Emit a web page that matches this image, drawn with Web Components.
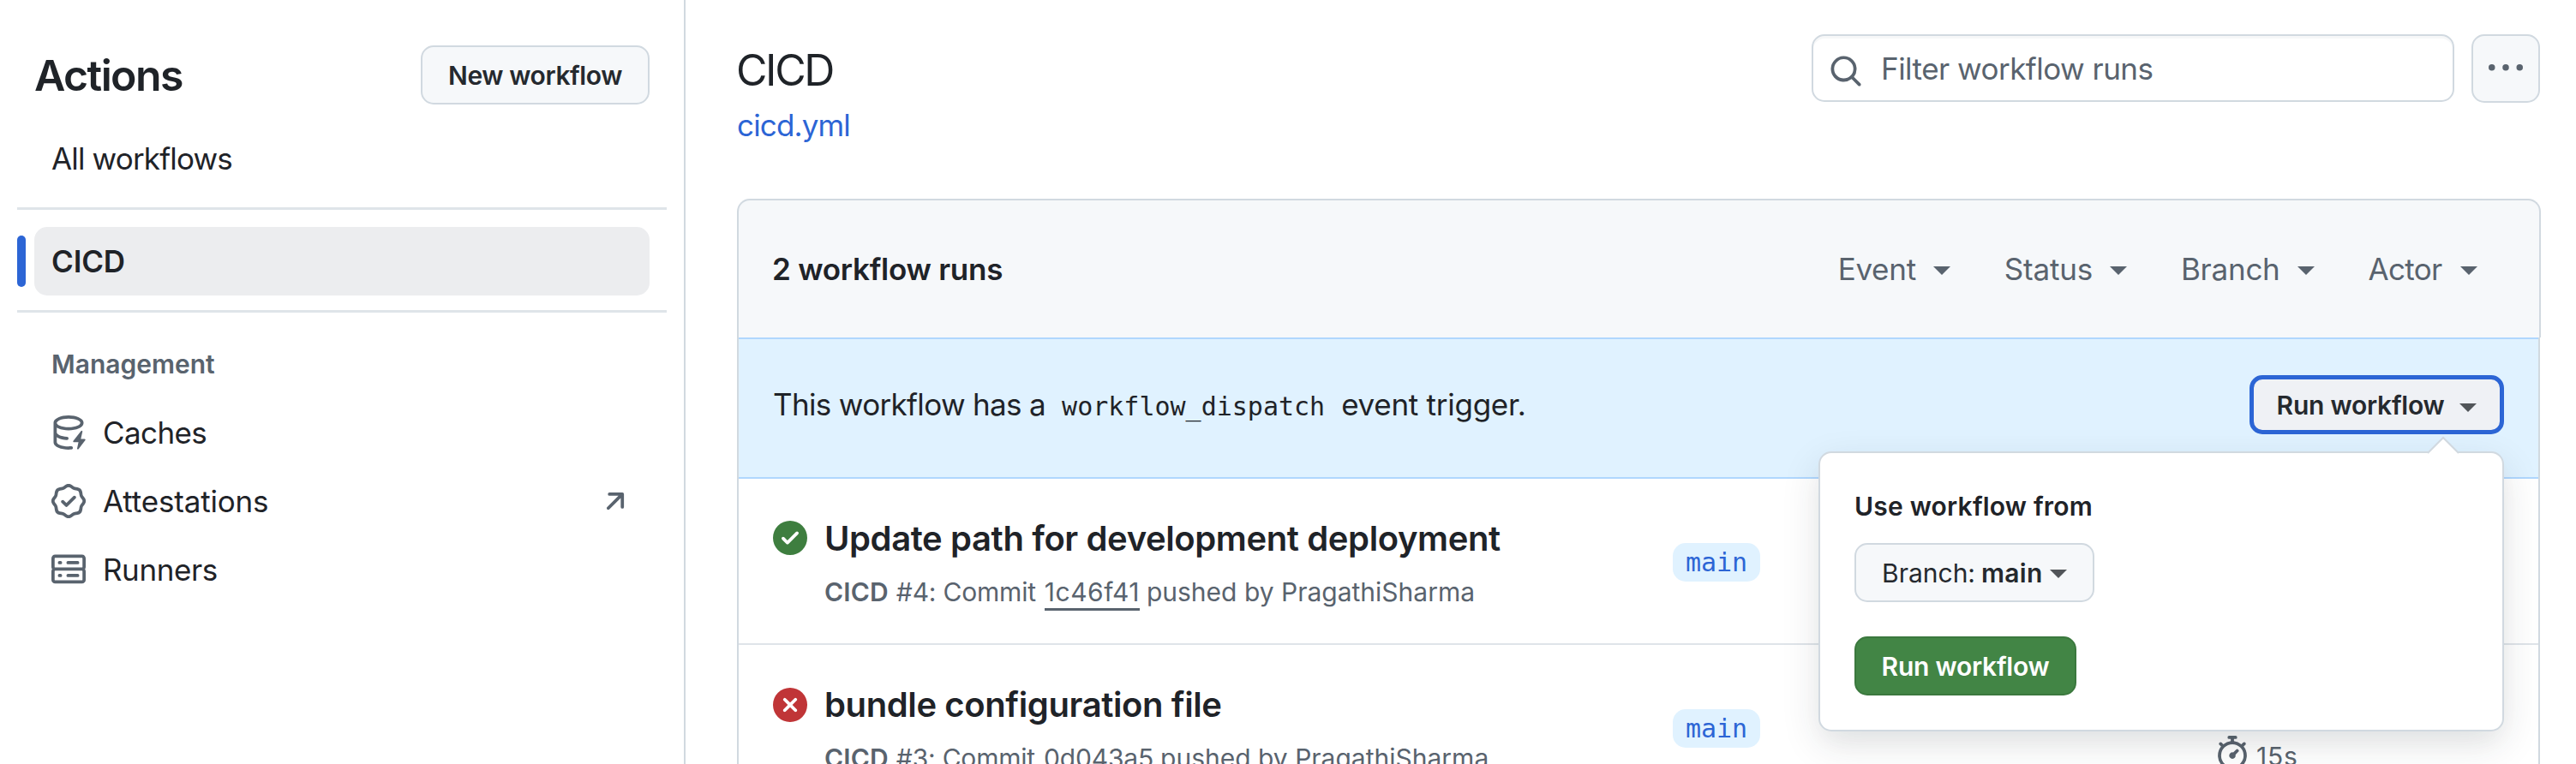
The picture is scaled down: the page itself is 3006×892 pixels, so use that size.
<!DOCTYPE html>
<html lang="en">
<head>
<meta charset="utf-8">
<title>Workflow runs</title>
<style>
  html, body { margin: 0; background: #fff; }
  body {
    width: 3006px; height: 892px; overflow: hidden;
    font-family: Inter, "Liberation Sans", sans-serif;
    color: #1f2328;
    --muted: #59636e;
    --border: #d1d9e0;
    --blue: #2c65d5;
  }
</style>
</head>
<body>
<actions-page></actions-page>

<script>
const ICONS = {
  cache: '<path d="M2.5 5.724V8c0 .248.238.7 1.169 1.159.874.43 2.144.745 3.62.822a.75.75 0 1 1-.078 1.498c-1.622-.085-3.102-.432-4.204-.975a5.565 5.565 0 0 1-.507-.28V12.5c0 .133.058.318.282.551.227.237.591.483 1.101.707 1.015.447 2.47.742 4.117.742.406 0 .802-.018 1.183-.052a.751.751 0 1 1 .134 1.494C8.89 15.98 8.45 16 8 16c-1.805 0-3.475-.32-4.721-.869-.623-.274-1.173-.619-1.579-1.041-.408-.425-.7-.964-.7-1.59v-9c0-.626.292-1.165.7-1.591.406-.42.956-.766 1.579-1.04C4.525.32 6.195 0 8 0c1.806 0 3.476.32 4.721.869.623.274 1.173.619 1.579 1.041.408.425.7.964.7 1.59 0 .626-.292 1.165-.7 1.591-.406.42-.956.766-1.578 1.04C11.475 6.68 9.805 7 8 7c-1.805 0-3.475-.32-4.721-.869a6.15 6.15 0 0 1-.779-.407Zm0-2.224c0 .133.058.318.282.551.227.237.591.483 1.101.707C4.898 5.205 6.353 5.5 8 5.5c1.646 0 3.101-.295 4.118-.742.508-.224.873-.471 1.1-.708.224-.232.282-.417.282-.55 0-.133-.058-.318-.282-.551-.227-.237-.591-.483-1.101-.707C11.102 1.795 9.647 1.5 8 1.5c-1.646 0-3.101.295-4.118.742-.508.224-.873.471-1.1.708-.224.232-.282.417-.282.55Z"/><path d="M14.49 7.582a.375.375 0 0 0-.66-.313l-3.625 4.625a.375.375 0 0 0 .295.606h2.127l-.619 2.922a.375.375 0 0 0 .666.304l3.125-4.125A.375.375 0 0 0 15.5 11h-1.778l.769-3.418Z"/>',
  verified: '<path d="m9.585.52.929.68c.153.112.331.186.518.215l1.138.175a2.678 2.678 0 0 1 2.24 2.24l.174 1.139c.029.187.103.365.215.518l.68.928a2.677 2.677 0 0 1 0 3.17l-.68.928a1.174 1.174 0 0 0-.215.518l-.175 1.138a2.678 2.678 0 0 1-2.241 2.241l-1.138.175a1.17 1.17 0 0 0-.518.215l-.928.68a2.677 2.677 0 0 1-3.17 0l-.928-.68a1.174 1.174 0 0 0-.518-.215L3.83 14.41a2.678 2.678 0 0 1-2.24-2.24l-.175-1.138a1.17 1.17 0 0 0-.215-.518l-.68-.928a2.677 2.677 0 0 1 0-3.17l.68-.928c.112-.153.186-.331.215-.518l.175-1.14a2.678 2.678 0 0 1 2.24-2.24l1.139-.175c.187-.029.365-.103.518-.215l.928-.68a2.677 2.677 0 0 1 3.17 0ZM7.303 1.728l-.927.68a2.67 2.67 0 0 1-1.18.489l-1.137.174a1.179 1.179 0 0 0-.987.987l-.174 1.136a2.677 2.677 0 0 1-.489 1.18l-.68.928a1.18 1.18 0 0 0 0 1.394l.68.927c.256.348.424.753.489 1.18l.174 1.137c.078.509.478.909.987.987l1.136.174a2.67 2.67 0 0 1 1.18.489l.928.68c.414.305.979.305 1.394 0l.927-.68a2.67 2.67 0 0 1 1.18-.489l1.137-.174a1.18 1.18 0 0 0 .987-.987l.174-1.136a2.67 2.67 0 0 1 .489-1.18l.68-.928a1.176 1.176 0 0 0 0-1.394l-.68-.927a2.686 2.686 0 0 1-.489-1.18l-.174-1.137a1.179 1.179 0 0 0-.987-.987l-1.136-.174a2.677 2.677 0 0 1-1.18-.489l-.928-.68a1.176 1.176 0 0 0-1.394 0ZM11.28 6.78l-3.75 3.75a.75.75 0 0 1-1.06 0L4.72 8.78a.751.751 0 0 1 .018-1.042.751.751 0 0 1 1.042-.018L7 8.94l3.22-3.22a.751.751 0 0 1 1.042.018.751.751 0 0 1 .018 1.042Z"/>',
  server: '<path d="M1.75 1h12.5c.966 0 1.75.784 1.75 1.75v4c0 .372-.116.717-.314 1 .198.283.314.628.314 1v4a1.75 1.75 0 0 1-1.75 1.75H1.75A1.75 1.75 0 0 1 0 12.75v-4c0-.358.109-.707.314-1a1.739 1.739 0 0 1-.314-1v-4C0 1.784.784 1 1.75 1ZM1.5 2.75v4c0 .138.112.25.25.25h12.5a.25.25 0 0 0 .25-.25v-4a.25.25 0 0 0-.25-.25H1.75a.25.25 0 0 0-.25.25Zm.25 5.75a.25.25 0 0 0-.25.25v4c0 .138.112.25.25.25h12.5a.25.25 0 0 0 .25-.25v-4a.25.25 0 0 0-.25-.25ZM7 4.75A.75.75 0 0 1 7.75 4h4.5a.75.75 0 0 1 0 1.5h-4.5A.75.75 0 0 1 7 4.75ZM7.75 10h4.5a.75.75 0 0 1 0 1.5h-4.5a.75.75 0 0 1 0-1.5ZM3 4.75A.75.75 0 0 1 3.75 4h.5a.75.75 0 0 1 0 1.5h-.5A.75.75 0 0 1 3 4.75ZM3.75 10h.5a.75.75 0 0 1 0 1.5h-.5a.75.75 0 0 1 0-1.5Z"/>',
  arrow: '<path d="M4.53 4.75A.75.75 0 0 1 5.28 4h6.01a.75.75 0 0 1 .75.75v6.01a.75.75 0 0 1-1.5 0v-4.2l-5.26 5.261a.749.749 0 0 1-1.275-.326.749.749 0 0 1 .215-.734L9.48 5.5h-4.2a.75.75 0 0 1-.75-.75Z"/>',
  search: '<path d="M10.68 11.74a6 6 0 0 1-7.922-8.982 6 6 0 0 1 8.982 7.922l3.04 3.04a.749.749 0 0 1-.326 1.275.749.749 0 0 1-.734-.215ZM11.5 7a4.499 4.499 0 1 0-8.997 0A4.499 4.499 0 0 0 11.5 7Z"/>',
  kebab: '<path d="M8 9a1.5 1.5 0 1 0 0-3 1.5 1.5 0 0 0 0 3ZM1.5 9a1.5 1.5 0 1 0 0-3 1.5 1.5 0 0 0 0 3Zm13 0a1.5 1.5 0 1 0 0-3 1.5 1.5 0 0 0 0 3Z"/>',
  success: '<path d="M8 16A8 8 0 1 1 8 0a8 8 0 0 1 0 16Zm3.78-9.72a.751.751 0 0 0-.018-1.042.751.751 0 0 0-1.042-.018L6.75 9.19 5.28 7.72a.751.751 0 0 0-1.042.018.751.751 0 0 0-.018 1.042l2 2a.75.75 0 0 0 1.06 0Z"/>',
  failure: '<path d="M2.343 13.657A8 8 0 1 1 13.658 2.343 8 8 0 0 1 2.343 13.657ZM6.03 4.97a.751.751 0 0 0-1.042.018.751.751 0 0 0-.018 1.042L6.94 8 4.97 9.97a.749.749 0 0 0 .326 1.275.749.749 0 0 0 .734-.215L8 9.06l1.97 1.97a.749.749 0 0 0 1.275-.326.749.749 0 0 0-.215-.734L9.06 8l1.97-1.97a.749.749 0 0 0-.326-1.275.749.749 0 0 0-.734.215L8 6.94Z"/>',
  stopwatch: '<path d="M5.75.75A.75.75 0 0 1 6.5 0h3a.75.75 0 0 1 0 1.5h-.75v1l-.001.041a6.724 6.724 0 0 1 3.464 1.435l.007-.006.75-.75a.749.749 0 0 1 1.275.326.749.749 0 0 1-.215.734l-.75.75-.006.007a6.75 6.75 0 1 1-10.548 0L2.72 5.03l-.75-.75a.751.751 0 0 1 .018-1.042.751.751 0 0 1 1.042-.018l.75.75.007.006A6.72 6.72 0 0 1 7.25 2.541V1.5H6.5a.75.75 0 0 1-.75-.75ZM8 14.5a5.25 5.25 0 1 0-.001-10.501A5.25 5.25 0 0 0 8 14.5Zm.389-6.7 1.33-1.33a.75.75 0 1 1 1.061 1.06L9.45 8.861A1.503 1.503 0 0 1 8 10.75a1.499 1.499 0 1 1 .389-2.95Z"/>'
};

/* Registers an element whose shadow root is rendered from css + markup. */
function define(name, css, html) {
  customElements.define(name, class extends HTMLElement {
    connectedCallback() {
      if (this.shadowRoot) return;
      const root = this.attachShadow({ mode: 'open' });
      const t = document.createElement('template');
      t.innerHTML = `<style>*{box-sizing:border-box}${css}</style>${typeof html === 'function' ? html(this) : html}`;
      root.append(t.content.cloneNode(true));
    }
  });
}

define('oct-icon', `
  :host { display: block; flex: none; width: 40px; height: 40px; }
  svg { display: block; width: 100%; height: 100%; fill: currentColor; }`,
  el => `<svg viewBox="0 0 16 16" aria-hidden="true">${ICONS[el.getAttribute('name')]}</svg>`);

define('drop-caret', `
  :host { display: block; flex: none; width: 0; height: 0;
    border: 10px solid transparent; border-top-color: currentColor; border-bottom: 0; }`, '');

define('ui-button', `
  :host { display: flex; align-items: center; justify-content: center; flex: none; height: 69px;
    box-sizing: border-box; border: 2px solid var(--border); border-radius: 15px; background: #f6f8fa;
    color: #25292e; font-size: 30px; font-weight: 560; white-space: nowrap; }
  :host([variant=primary]) { background: #428545; border-color: #3b783e; color: #fff; }
  :host([variant=focus]) { background: #eff1f5; border: 5px solid var(--blue); }`, '<slot></slot>');

define('nav-item', `
  :host { display: flex; align-items: center; height: 80px; margin: 0 40px 0 40px; padding: 0 20px;
    box-sizing: border-box; border-radius: 15px; font-size: 35px; position: relative; white-space: nowrap; }
  :host([current]) { background: #ecedef; font-weight: 600; }
  :host([current])::before { content: ""; position: absolute; left: -20px; top: 10px; width: 10px; height: 60px;
    border-radius: 5px; background: var(--blue); }
  oct-icon { color: var(--muted); margin-right: 20px; }
  .trail { margin: 0 0 0 auto; }`,
  el => `${el.hasAttribute('icon') ? `<oct-icon name="${el.getAttribute('icon')}"></oct-icon>` : ''}<slot></slot>
    ${el.hasAttribute('external') ? '<oct-icon class="trail" name="arrow"></oct-icon>' : ''}`);

define('nav-divider', `:host { display: block; height: 3px; margin: 17px 20px 20px; background: #dfe4e9; }`, '');

define('side-bar', `
  :host { display: block; flex: none; width: 800px; height: 892px; box-sizing: border-box;
    border-right: 2px solid var(--border); padding-top: 53px; }
  header { display: flex; align-items: center; justify-content: space-between; height: 69px; margin: 0 40px 23px; }
  h2 { margin: 0; font-size: 50px; font-weight: 600; letter-spacing: -1.59px; }
  ui-button { width: 267px; letter-spacing: -.4px; }
  h3 { margin: 0; height: 80px; padding-left: 60px; line-height: 80px; font-size: 30px; font-weight: 600; color: var(--muted); }`, `
  <header><h2>Actions</h2><ui-button>New workflow</ui-button></header>
  <nav-item style="letter-spacing:-.84px">All workflows</nav-item>
  <nav-divider></nav-divider>
  <nav-item current style="letter-spacing:-.16px">CICD</nav-item>
  <nav-divider></nav-divider>
  <h3>Management</h3>
  <nav-item icon="cache" style="letter-spacing:-.6px">Caches</nav-item>
  <nav-item icon="verified" external style="letter-spacing:-.17px">Attestations</nav-item>
  <nav-item icon="server" style="letter-spacing:-.4px">Runners</nav-item>`);

define('page-heading', `
  :host { display: flex; justify-content: space-between; height: 232px; padding-top: 40px; box-sizing: border-box; }
  h1 { margin: 11px 0 6px -1px; font-size: 50px; line-height: 63px; font-weight: 400; letter-spacing: -2.4px; }
  a { display: block; font-size: 35px; line-height: 53px; letter-spacing: -.85px; color: var(--blue); }
  .tools { display: flex; gap: 20px; align-items: flex-start; color: var(--muted); }
  .search { display: flex; align-items: center; width: 750px; height: 79px; padding-left: 18px;
    border: 2px solid var(--border); border-radius: 15px; font-size: 35px; letter-spacing: -.52px;
    box-shadow: inset 0 3px 0 #f6f7f8; }
  .search oct-icon { margin: 6px 21px 0 0; }
  ui-button { width: 80px; height: 80px; color: var(--muted); }`, `
  <div><h1>CICD</h1><a>cicd.yml</a></div>
  <div class="tools">
    <div class="search"><oct-icon name="search"></oct-icon>Filter workflow runs</div>
    <ui-button><oct-icon name="kebab"></oct-icon></ui-button>
  </div>`);

define('filter-menu', `
  :host { display: flex; align-items: center; gap: 20px; white-space: nowrap; }
  drop-caret { margin-top: 4px; }`, '<slot></slot><drop-caret></drop-caret>');

define('runs-header', `
  :host { display: flex; align-items: center; justify-content: space-between; height: 162px; box-sizing: border-box;
    margin-right: -1px; padding: 0 72px 0 40px; border: 2px solid var(--border); border-bottom: 0;
    border-radius: 15px 15px 0 0; background: #f6f8fa; font-size: 35px; }
  strong { font-weight: 600; letter-spacing: -.25px; margin-left: -1px; }
  div { display: flex; gap: 63px; color: var(--muted); }`, `
  <strong>2 workflow runs</strong>
  <div>
    <filter-menu style="letter-spacing:-.28px">Event</filter-menu>
    <filter-menu style="letter-spacing:-.2px">Status</filter-menu>
    <filter-menu style="letter-spacing:-.25px">Branch</filter-menu>
    <filter-menu style="letter-spacing:-.7px;gap:21.5px">Actor</filter-menu>
  </div>`);

define('dispatch-popover', `
  :host { display: block; position: absolute; top: 89px; right: 0; width: 800px; height: 327px; box-sizing: border-box;
    padding: 40px; border: 2px solid var(--border); border-radius: 15px; background: #fff; z-index: 2;
    box-shadow: 0 15px 30px -7.5px #25292e0a, 0 15px 45px 0 #25292e1f; color: #1f2328; }
  svg { position: absolute; right: 50px; top: -20px; display: block; }
  p { margin: 0 0 20px; line-height: 45px; font-size: 30px; font-weight: 600; letter-spacing: .2px; }
  ui-button { letter-spacing: 0; }
  .branch { width: 280px; font-weight: 400; margin-bottom: 40px; justify-content: flex-start; padding-left: 30px; }
  .branch b { font-weight: 600; margin: 0 8px 0 7px; letter-spacing: .3px; }
  .run { width: 259px; letter-spacing: -.25px; }
  drop-caret { color: #515559; margin-top: 2px; }`, `
  <svg width="38" height="21" viewBox="0 0 38 21"><path d="M1 20 19 2 37 20V21H1Z" fill="#fff"/><path d="M1 20 19 2 37 20" fill="none" stroke="#d1d9e0" stroke-width="2"/></svg>
  <p>Use workflow from</p>
  <ui-button class="branch">Branch:<b>main</b><drop-caret></drop-caret></ui-button>
  <ui-button class="run" variant="primary">Run workflow</ui-button>`);

define('dispatch-banner', `
  :host { display: flex; justify-content: space-between; height: 165px; box-sizing: border-box; padding: 42px 40px 0;
    border: solid #b0d7fe; border-width: 2px 0; background: #e0f2ff; }
  p { display: flex; align-items: baseline; gap: 19px; margin: 0; font-size: 35px; line-height: 69px; white-space: nowrap; }
  code { font: 30px/1 "DejaVu Sans Mono", "Liberation Mono", monospace; }
  .anchor { position: relative; }
  .run { width: 297px; letter-spacing: -.25px; }
  .run drop-caret { margin: 7px 0 0 18px; color: #515559; }`, `
  <p><span style="letter-spacing:-.66px">This workflow has a</span><code>workflow_dispatch</code><span style="letter-spacing:-.27px">event trigger.</span></p>
  <div class="anchor">
    <ui-button class="run" variant="focus">Run workflow<drop-caret></drop-caret></ui-button>
    <dispatch-popover></dispatch-popover>
  </div>`);

define('branch-label', `
  :host { display: flex; align-items: center; justify-content: center; width: 102px; height: 45px; border-radius: 15px;
    background: #e0f2ff; color: var(--blue); font: 30px/1 "DejaVu Sans Mono", "Liberation Mono", monospace; }`, '<slot></slot>');

define('workflow-run', `
  :host { display: grid; grid-template-columns: 60px 990px 633px 1fr; height: 194px; box-sizing: border-box;
    padding-left: 40px; border-bottom: 2px solid #dfe4e9; }
  .icon { margin-top: 49px; color: #3e7e3f; }
  :host([status=failure]) .icon { color: #c03537; margin-top: 50px; }
  h4 { margin: 45px 0 15px; font-size: 40px; line-height: 50px; font-weight: 600; letter-spacing: -.39px; white-space: nowrap; }
  p { display: flex; align-items: baseline; margin: 0; font-size: 30px; line-height: 45px; color: var(--muted); white-space: nowrap; }
  b { font-weight: 600; letter-spacing: .16px; margin-right: 9px; }
  .num { letter-spacing: -.2px; margin-right: 10px; }
  ::slotted([slot=sha]) { display: block; line-height: 38px; letter-spacing: var(--sha, .5px);
    border-bottom: 3px solid var(--muted); margin-right: 8px; }
  branch-label { margin-top: 75px; }
  .meta { margin-top: 106px; }
  .meta div { display: flex; align-items: flex-start; gap: 8px; color: var(--muted); font-size: 30px; line-height: 48px; letter-spacing: .8px; }`,
  el => `
  <oct-icon class="icon" name="${el.getAttribute('status')}"></oct-icon>
  <div>
    <h4><slot name="title"></slot></h4>
    <p><b>CICD</b><span class="num">#${el.getAttribute('number')}: Commit</span><slot name="sha"></slot><span>pushed by PragathiSharma</span></p>
  </div>
  <branch-label>main</branch-label>
  <div class="meta">${el.hasAttribute('duration') ? `<div><oct-icon name="stopwatch"></oct-icon>${el.getAttribute('duration')}</div>` : ''}</div>`);

define('runs-box', `
  :host { display: block; }
  .rows { border: solid var(--border); border-width: 0 2px; }`, `
  <runs-header></runs-header>
  <div class="rows">
    <dispatch-banner></dispatch-banner>
    <workflow-run status="success" number="4">
      <span slot="title">Update path for development deployment</span><span slot="sha">1c46f41</span>
    </workflow-run>
    <workflow-run status="failure" number="3" duration="15s" style="--sha:-.16px">
      <span slot="title">bundle configuration file</span><span slot="sha">0d043a5</span>
    </workflow-run>
  </div>`);

define('actions-page', `
  :host { display: flex; width: 3006px; height: 892px; overflow: hidden; }
  main { flex: none; width: 2104px; margin-left: 60px; }`, `
  <side-bar></side-bar>
  <main><page-heading></page-heading><runs-box></runs-box></main>`);
</script>
</body>
</html>
